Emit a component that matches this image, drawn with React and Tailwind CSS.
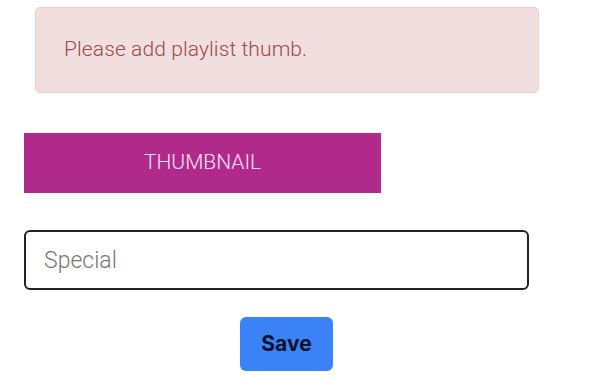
import React, { useState } from 'react';

const App = () => {
  const [name, setName] = useState('');

  return (
    <div className="w-[590px] h-[380px] bg-white overflow-hidden" style={{ fontFamily: 'Roboto, "Liberation Sans", sans-serif' }}>
      <div className="ml-[24px] w-[525px] pt-[7px] flex flex-col">
        {/* alert */}
        <div className="mx-[11px] w-[504px] h-[86px] bg-[#f1dede] border border-[#e9cdd0] rounded-[5px] flex items-center px-[28px]">
          <p className="text-[21px] font-light text-[#9c4a4c] tracking-[0.1px]">Please add playlist thumb.</p>
        </div>

        <button className="mt-[40px] w-[357px] h-[60px] bg-[#b02a8b] text-[#f6e1f0] text-[21px] font-light flex items-center justify-center">
          THUMBNAIL
        </button>

        <input
          type="text"
          value={name}
          onChange={(e) => setName(e.target.value)}
          placeholder="Special"
          className="mt-[37px] w-[505px] h-[60px] border-2 border-[#222] rounded-[6px] px-[18px] text-[23px] font-light placeholder:text-[#777] outline-none"
        />

        <div className="mt-[27px] flex justify-center">
          <button className="w-[93px] h-[54px] bg-[#3b82f6] rounded-[6px] text-[21px] font-bold text-[#0a1230]" style={{ fontFamily: 'Inter, "Liberation Sans", sans-serif' }}>
            Save
          </button>
        </div>
      </div>
    </div>
  );
};

export default App;
